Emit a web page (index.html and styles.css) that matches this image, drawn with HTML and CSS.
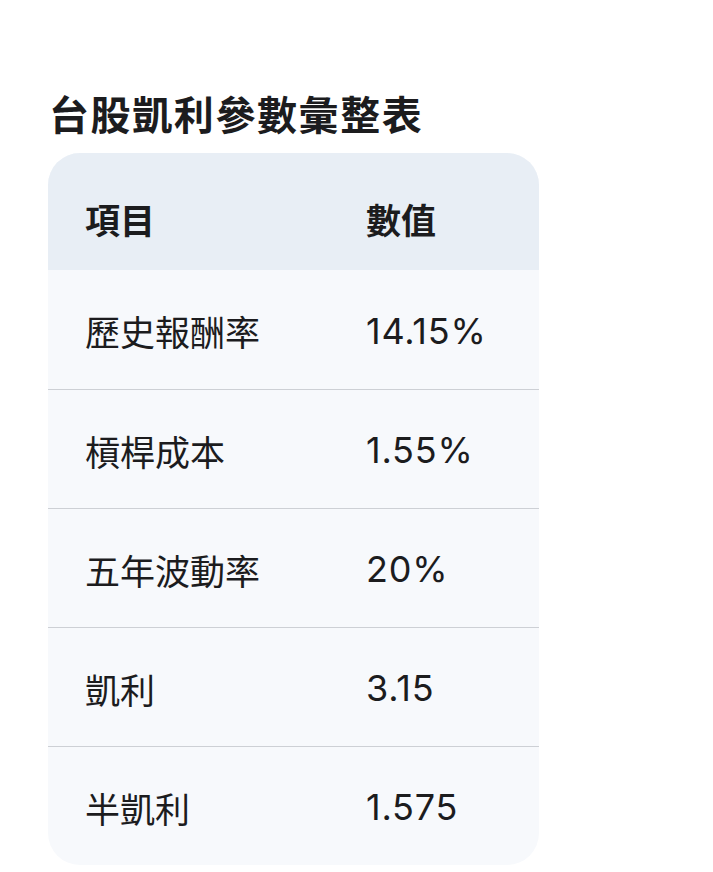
FILE: index.html
```html
<!DOCTYPE html>
<html lang="zh-Hant">
<head>
<meta charset="utf-8">
<link rel="stylesheet" href="styles.css">
</head>
<body>
<main class="page">
  <h1 class="title">台股凱利參數彙整表</h1>
  <div class="card">
    <table class="data">
      <thead>
        <tr><th class="col-name">項目</th><th class="col-val">數值</th></tr>
      </thead>
      <tbody>
        <tr><td>歷史報酬率</td><td class="num">14.15%</td></tr>
        <tr><td>槓桿成本</td><td class="num">1.55%</td></tr>
        <tr><td>五年波動率</td><td class="num">20%</td></tr>
        <tr><td>凱利</td><td class="num">3.15</td></tr>
        <tr><td>半凱利</td><td class="num">1.575</td></tr>
      </tbody>
    </table>
  </div>
</main>
</body>
</html>
```
FILE: styles.css
```css
html, body {
  margin: 0;
  padding: 0;
  background: #ffffff;
}
body {
  font-family: "Inter", "Noto Sans CJK TC", "Noto Sans", sans-serif;
  color: #1c1c1e;
}
.page {
  padding: 91px 0 0 48px;
}
.title {
  margin: 0 0 12px 1px;
  font-size: 40px;
  font-weight: 700;
  line-height: 50px;
  letter-spacing: 1.6px;
  color: #1c1c1e;
}
.card {
  width: 491px;
  border-radius: 32px;
  overflow: hidden;
  background: #f7f9fc;
}
.data {
  width: 100%;
  border-collapse: collapse;
  font-size: 35px;
}
.data th,
.data td {
  text-align: left;
  padding: 0 0 0 37px;
  vertical-align: middle;
  box-sizing: border-box;
}
.data td {
  height: 119px;
  padding-top: 3px;
  font-weight: 400;
}
.data th {
  font-weight: 600;
  background: #e8eef5;
  height: 117px;
  padding-top: 14px;
}
.col-name { width: 281px; }
.data td.num {
  font-size: 36px;
  letter-spacing: 0.8px;
}
.data tbody tr + tr td {
  border-top: 1px solid #cdd0d5;
}
```
